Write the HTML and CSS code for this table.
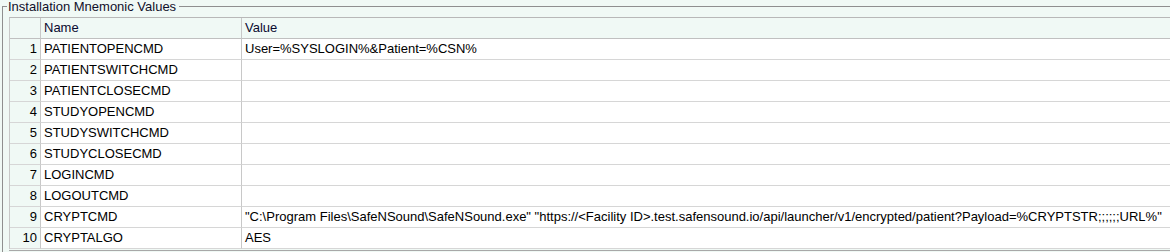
FILE: index.html
```html
<!DOCTYPE html>
<html>
<head>
<meta charset="utf-8">
<link rel="stylesheet" href="styles.css">
</head>
<body>
<fieldset class="group">
  <legend class="group-title">Installation Mnemonic Values</legend>
  <div class="grid">
    <div class="hdr num"></div><div class="hdr name">Name</div><div class="hdr value">Value</div>
    <div class="num">1</div><div class="cell name">PATIENTOPENCMD</div><div class="cell value">User=%SYSLOGIN%&amp;Patient=%CSN%</div>
    <div class="num">2</div><div class="cell name">PATIENTSWITCHCMD</div><div class="cell value"></div>
    <div class="num">3</div><div class="cell name">PATIENTCLOSECMD</div><div class="cell value"></div>
    <div class="num">4</div><div class="cell name">STUDYOPENCMD</div><div class="cell value"></div>
    <div class="num">5</div><div class="cell name">STUDYSWITCHCMD</div><div class="cell value"></div>
    <div class="num">6</div><div class="cell name">STUDYCLOSECMD</div><div class="cell value"></div>
    <div class="num">7</div><div class="cell name">LOGINCMD</div><div class="cell value"></div>
    <div class="num">8</div><div class="cell name">LOGOUTCMD</div><div class="cell value"></div>
    <div class="num">9</div><div class="cell name">CRYPTCMD</div><div class="cell value">"C:\Program Files\SafeNSound\SafeNSound.exe" "https://&lt;Facility ID&gt;.test.safensound.io/api/launcher/v1/encrypted/patient?Payload=%CRYPTSTR;;;;;;URL%"</div>
    <div class="num">10</div><div class="cell name">CRYPTALGO</div><div class="cell value">AES</div>
  </div>
  <div class="grid-foot"></div>
</fieldset>
</body>
</html>
```

FILE: styles.css
```css
html, body {
  margin: 0;
  padding: 0;
  background: #f0f9f5;
  font-family: "Liberation Sans", Arial, sans-serif;
  font-size: 13px;
  color: #000;
  overflow: hidden;
}

.group {
  margin: 0 0 0 2px;
  padding: 11px 0 0 6px;
  border: none;
  border-top: 1px solid #8f8f8f;
  border-left: 1px solid #8f8f8f;
  min-width: 0;
}

.group-title {
  padding: 0 3px 0 1px;
  margin-left: -2px;
  line-height: 13px;
  color: #10102a;
}

.grid {
  display: grid;
  grid-template-columns: 31px 201px 1fr;
  grid-auto-rows: 21px;
  border-top: 1px solid #b8b8b8;
  border-left: 1px solid #c8c8c8;
  margin-top: -7px;
}

.grid > div {
  border-right: 1px solid #c8c8c8;
  border-bottom: 1px solid #d6d6d6;
  white-space: nowrap;
  overflow: hidden;
  line-height: 20px;
}

.grid > .hdr {
  height: 20px;
  background: #f0f9f5;
  color: #0a0a30;
  padding-left: 3px;
  border-bottom-color: #c0c0c0;
}

.grid > .hdr.num {
  padding-left: 0;
}

.grid > .num {
  background: #f0f9f5;
  text-align: right;
  padding-right: 3px;
}

.grid > .cell {
  background: #fff;
  padding-left: 3px;
}

.grid > .value {
  border-right: none;
}

.grid-foot {
  margin-top: 1px;
  border-top: 1px solid #a8a8a8;
  height: 2px;
  background: #f0f9f5;
}
```
